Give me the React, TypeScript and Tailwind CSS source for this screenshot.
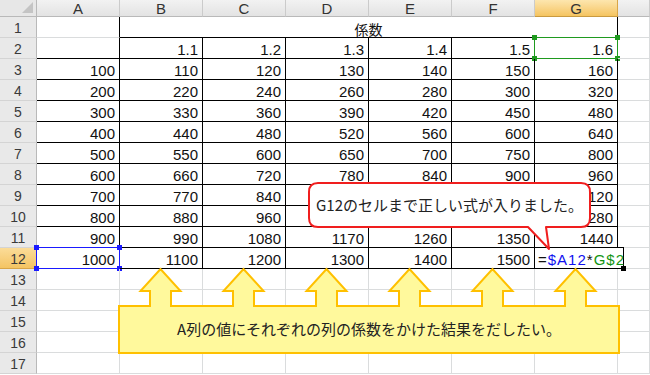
import React from "react";

const LETTERS = ["A", "B", "C", "D", "E", "F", "G", ""];
const COEFFS = [1.1, 1.2, 1.3, 1.4, 1.5, 1.6];
const ROWS = Array.from({ length: 17 }, (_, i) => i + 1);

// cells that carry the black table border (A=1 ... H=8)
function boxed(r: number, c: number) {
  if (r === 1 || r === 2) return c >= 2 && c <= 7;
  if (r >= 3 && r <= 12) return c >= 1 && c <= 7;
  return false;
}

function cellText(r: number, c: number) {
  if (r === 2 && c >= 2 && c <= 7) return COEFFS[c - 2].toFixed(1);
  if (r >= 3 && r <= 12) {
    const a = (r - 2) * 100;
    if (c === 1) return String(a);
    if (c >= 2 && c <= 7) return String(Math.round(a * COEFFS[c - 2]));
  }
  return "";
}

function Handles({ color }: { color: string }) {
  return (
    <>
      <span className={`absolute -left-[3px] -top-[3px] w-[5px] h-[5px] ${color}`} />
      <span className={`absolute -right-[3px] -top-[3px] w-[5px] h-[5px] ${color}`} />
      <span className={`absolute -left-[3px] -bottom-[3px] w-[5px] h-[5px] ${color}`} />
      <span className={`absolute -right-[3px] -bottom-[3px] w-[5px] h-[5px] ${color}`} />
    </>
  );
}

function Cell({ r, c }: { r: number; c: number }) {
  const rightBlack = boxed(r, c) || boxed(r, c + 1);
  const bottomBlack = boxed(r, c) || boxed(r + 1, c);
  const text = cellText(r, c);
  const isG2 = r === 2 && c === 7;
  const isA12 = r === 12 && c === 1;
  const isG12 = r === 12 && c === 7;

  return (
    <div
      className={`relative flex items-end justify-end pr-[4px] border-r border-b leading-[16px] ${
        rightBlack ? "border-r-black" : "border-r-[#dadcdd]"
      } ${bottomBlack ? "border-b-black" : "border-b-[#dadcdd]"}`}
    >
      {!isG12 && <span>{text}</span>}
      {isG2 && (
        <div className="absolute -left-[1px] -top-[1px] -right-[1px] -bottom-[1px] border border-[#1f9a1f]">
          <Handles color="bg-[#1f9a1f]" />
        </div>
      )}
      {isA12 && (
        <div className="absolute -left-[1px] -top-[1px] -right-[1px] -bottom-[1px] border border-[#1a1aff]">
          <Handles color="bg-[#1a1aff]" />
        </div>
      )}
      {isG12 && (
        <div className="absolute -left-[1px] -top-[1px] -right-[7px] -bottom-[1px] z-10 bg-white border border-black flex items-end pl-[3px] leading-[16px] tracking-[1px]">
          <span>=</span>
          <span className="text-[#1010f0]">$A12</span>
          <span>*</span>
          <span className="text-[#119411]">G$2</span>
          <span className="absolute -right-[3px] -bottom-[3px] w-[5px] h-[5px] bg-black" />
        </div>
      )}
    </div>
  );
}

function Callouts() {
  const tips = [0, 1, 2, 3, 4, 5].map((i) => 160.5 + 83 * i);
  let d = "M 119 306";
  tips.forEach((x) => {
    d += ` H ${x - 10.5} V 291 H ${x - 20} L ${x} 269 L ${x + 20} 291 H ${x + 10.5} V 306`;
  });
  d += " H 619 V 353 H 119 Z";

  return (
    <>
      <svg className="absolute inset-0 pointer-events-none z-20" width="650" height="375">
        <path
          d="M 318 183 H 581 Q 590 183 590 192 V 218 Q 590 227 581 227 H 546 L 549 249 L 528 227 H 318 Q 309 227 309 218 V 192 Q 309 183 318 183 Z"
          fill="#ffffff"
          stroke="#f01e1e"
          strokeWidth="2"
          strokeLinejoin="round"
        />
        <path d={d} fill="#fff99c" stroke="#ffc000" strokeWidth="2" strokeLinejoin="miter" />
      </svg>
      <div className="absolute z-30 left-[309px] top-[183px] w-[281px] h-[44px] flex items-center justify-center text-[15px] text-[#222] font-['Noto_Sans_CJK_JP',sans-serif]">
        G12のセルまで正しい式が入りました。
      </div>
      <div className="absolute z-30 left-[119px] top-[306px] w-[500px] h-[47px] flex items-center justify-center text-[15px] text-[#222] font-['Noto_Sans_CJK_JP',sans-serif]">
        A列の値にそれぞれの列の係数をかけた結果をだしたい。
      </div>
    </>
  );
}

export default function App() {
  return (
    <div className="relative w-[650px] h-[375px] overflow-hidden bg-white text-[15px] text-[#111] font-['Liberation_Sans','Noto_Sans_CJK_JP',sans-serif]">
      <div className="grid grid-cols-[37px_repeat(7,83px)_1fr] grid-rows-[17px_repeat(17,21px)]">
        {/* corner */}
        <div className="relative bg-[#e7e7e7] border-r border-b border-[#b9b9b9]">
          <svg className="absolute right-[3px] bottom-[3px]" width="11" height="11">
            <polygon points="11,0 11,11 0,11" fill="#c4c4c4" />
          </svg>
        </div>
        {/* column headers */}
        {LETTERS.map((l, i) =>
          i === 6 ? (
            <div
              key={l}
              className="flex items-center justify-center bg-gradient-to-b from-[#fde6ae] to-[#f5c45f] border-r border-b border-r-[#d9a546] border-b-[#c99a40] text-[#333] leading-none"
            >
              {l}
            </div>
          ) : (
            <div
              key={i}
              className="flex items-center justify-center bg-gradient-to-b from-[#f2f2f2] to-[#e3e3e3] border-r border-b border-r-[#cbcbcb] border-b-[#b9b9b9] text-[#333] leading-none"
            >
              {l}
            </div>
          )
        )}

        {ROWS.map((r) => (
          <React.Fragment key={r}>
            <div
              className={`flex items-center justify-center border-r border-b leading-none text-[14px] text-[#3a3a3a] pt-[2px] ${
                r === 12
                  ? "bg-gradient-to-b from-[#fbdc98] to-[#f4c462] border-r-[#c99a40] border-b-[#d9a546]"
                  : "bg-[#e9e9e9] border-r-[#b9b9b9] border-b-[#d4d4d4]"
              }`}
            >
              {r}
            </div>
            {r === 1 ? (
              <>
                <Cell r={1} c={1} />
                <div className="col-span-6 flex items-end justify-center border-r border-b border-black leading-[16px] font-['Noto_Sans_CJK_JP',sans-serif] text-[14px]">
                  係数
                </div>
                <Cell r={1} c={8} />
              </>
            ) : (
              [1, 2, 3, 4, 5, 6, 7, 8].map((c) => <Cell key={c} r={r} c={c} />)
            )}
          </React.Fragment>
        ))}
      </div>
      <Callouts />
    </div>
  );
}
